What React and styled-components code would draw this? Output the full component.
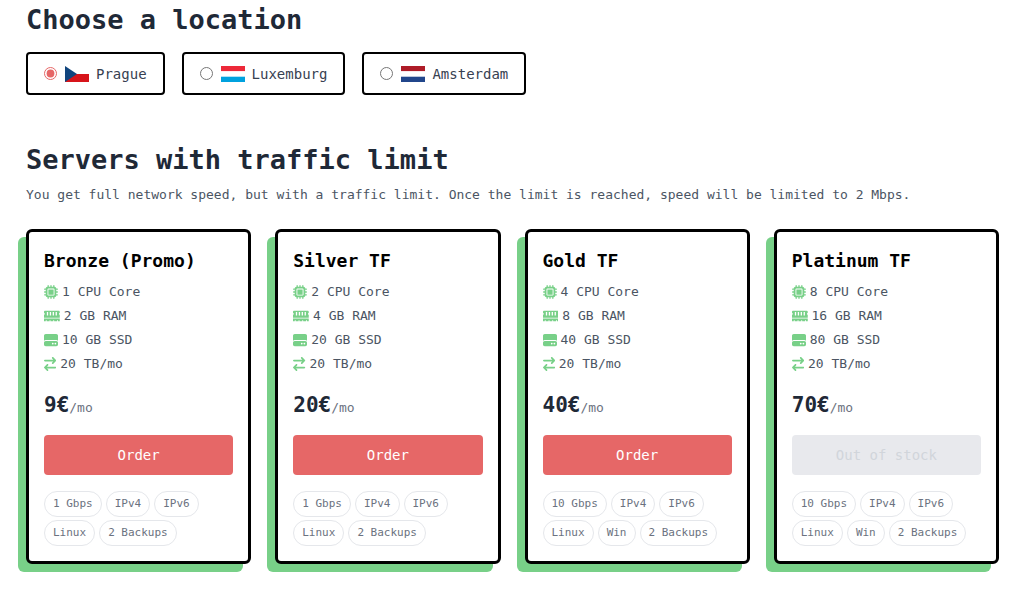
import React, { useState } from "react";
import styled, { createGlobalStyle } from "styled-components";
import { FaMicrochip, FaHardDrive } from "react-icons/fa6";

const GlobalStyle = createGlobalStyle`
  *, *::before, *::after { box-sizing: border-box; }
  body {
    margin: 0;
    background: #fff;
    color: #1f2937;
    font-family: "DejaVu Sans Mono", "Liberation Mono", monospace;
  }
  button, input { font-family: inherit; }
`;

const Page = styled.main`
  padding: 0 25px 24px 26px;
`;

const Heading = styled.h2`
  margin: 0;
  font-size: 27px;
  line-height: 40px;
  font-weight: 700;
`;

const Locations = styled.div`
  display: flex;
  flex-wrap: wrap;
  gap: 17px;
  margin: 12px 0 45px;
`;

const LocationOption = styled.label`
  display: flex;
  align-items: center;
  height: 43px;
  padding: 0 16px;
  border: 2px solid #000;
  border-radius: 4px;
  font-size: 14px;
  line-height: 24px;
  color: #374151;
  cursor: pointer;
`;

const Radio = styled.input`
  width: 13px;
  height: 13px;
  margin: 0 8px 0 0;
  accent-color: #e66767;
`;

const Flag = styled.svg`
  width: 24px;
  height: 16px;
  margin-right: 7px;
`;

const Intro = styled.p`
  margin: 4px 0 23px;
  font-size: 13px;
  line-height: 22px;
  color: #4b5563;
`;

const Plans = styled.div`
  display: grid;
  grid-template-columns: repeat(auto-fit, minmax(220px, 1fr));
  gap: 24px;
`;

const Card = styled.article`
  padding: 15px;
  border: 3px solid #000;
  border-radius: 6px;
  background: #fff;
  box-shadow: -8px 8px 0 #78d088;
`;

const PlanName = styled.h3`
  margin: 0 0 5px;
  font-size: 18px;
  line-height: 28px;
  font-weight: 700;
  color: #000;
`;

const Specs = styled.ul`
  margin: 0;
  padding: 0;
  list-style: none;
`;

const Spec = styled.li`
  display: flex;
  align-items: center;
  gap: 4px;
  font-size: 13px;
  line-height: 24px;
  color: #4b5563;

  svg {
    width: auto;
    height: 14px;
    color: #78d088;
  }
`;

const Price = styled.p`
  margin: 13px 0 14px;
  font-size: 21px;
  line-height: 32px;
  font-weight: 700;
`;

const Period = styled.span`
  font-size: 13px;
  line-height: 1;
  font-weight: 400;
  color: #6b7280;
`;

const OrderButton = styled.button`
  display: block;
  width: 100%;
  height: 40px;
  margin-bottom: 16px;
  padding: 0;
  border: 0;
  border-radius: 4px;
  background: #e66767;
  color: #fff;
  font-size: 14px;
  line-height: 24px;
  cursor: pointer;

  &:disabled {
    background: #e8e9ed;
    color: #d1d5db;
    cursor: default;
  }
`;

const Tags = styled.ul`
  display: flex;
  flex-wrap: wrap;
  gap: 3px 4px;
  margin: 0;
  padding: 0;
  list-style: none;
`;

const Tag = styled.li`
  padding: 0 8px;
  border: 1px solid #e5e7eb;
  border-radius: 13px;
  font-size: 11px;
  line-height: 24px;
  color: #6b7280;
`;

function MemoryIcon() {
  return (
    <svg viewBox="0 0 576 512" fill="currentColor" fillRule="evenodd" aria-hidden="true">
      <path d="M32 64C14 64 0 78 0 96v40c18 8 28 22 28 40S18 208 0 216v104h576V216c-18-8-28-22-28-40s10-32 28-40V96c0-18-14-32-32-32zM104 112h48v128h-48zM211 112h48v128h-48zM317 112h48v128h-48zM424 112h48v128h-48z" />
      <path d="M0 344v104h64v-32c0-9 7-16 16-16s16 7 16 16v32h108v-32c0-9 7-16 16-16s16 7 16 16v32h104v-32c0-9 7-16 16-16s16 7 16 16v32h108v-32c0-9 7-16 16-16s16 7 16 16v32h64V344z" />
    </svg>
  );
}

function TrafficIcon() {
  return (
    <svg viewBox="0 0 448 512" fill="currentColor" aria-hidden="true">
      <path d="M438.6 150.6c12.5-12.5 12.5-32.8 0-45.3l-96-96c-12.5-12.5-32.8-12.5-45.3 0s-12.5 32.8 0 45.3L338.7 96H32C14.3 96 0 110.3 0 128s14.3 32 32 32H338.7l-41.4 41.4c-12.5 12.5-12.5 32.8 0 45.3s32.8 12.5 45.3 0l96-96zM105.4 502.6c12.5 12.5 32.8 12.5 45.3 0s12.5-32.8 0-45.3L109.3 416H416c17.7 0 32-14.3 32-32s-14.3-32-32-32H109.3l41.4-41.4c12.5-12.5 12.5-32.8 0-45.3s-32.8-12.5-45.3 0l-96 96c-12.5 12.5-12.5 32.8 0 45.3l96 96z" />
    </svg>
  );
}

const locations = [
  {
    name: "Prague",
    flag: (
      <>
        <path fill="#fff" d="M0 0h24v8H0z" />
        <path fill="#d7141a" d="M0 8h24v8H0z" />
        <path fill="#11457e" d="M0 0l12 8L0 16z" />
      </>
    ),
  },
  {
    name: "Luxemburg",
    flag: (
      <>
        <path fill="#ed2939" d="M0 0h24v5.3H0z" />
        <path fill="#fff" d="M0 5.3h24v5.4H0z" />
        <path fill="#00a1de" d="M0 10.7h24V16H0z" />
      </>
    ),
  },
  {
    name: "Amsterdam",
    flag: (
      <>
        <path fill="#ae1c28" d="M0 0h24v5.3H0z" />
        <path fill="#fff" d="M0 5.3h24v5.4H0z" />
        <path fill="#21468b" d="M0 10.7h24V16H0z" />
      </>
    ),
  },
];

const plans = [
  {
    name: "Bronze (Promo)",
    cpu: 1,
    ram: 2,
    ssd: 10,
    price: 9,
    inStock: true,
    tags: ["1 Gbps", "IPv4", "IPv6", "Linux", "2 Backups"],
  },
  {
    name: "Silver TF",
    cpu: 2,
    ram: 4,
    ssd: 20,
    price: 20,
    inStock: true,
    tags: ["1 Gbps", "IPv4", "IPv6", "Linux", "2 Backups"],
  },
  {
    name: "Gold TF",
    cpu: 4,
    ram: 8,
    ssd: 40,
    price: 40,
    inStock: true,
    tags: ["10 Gbps", "IPv4", "IPv6", "Linux", "Win", "2 Backups"],
  },
  {
    name: "Platinum TF",
    cpu: 8,
    ram: 16,
    ssd: 80,
    price: 70,
    inStock: false,
    tags: ["10 Gbps", "IPv4", "IPv6", "Linux", "Win", "2 Backups"],
  },
];

function Plan({ plan }) {
  return (
    <Card>
      <PlanName>{plan.name}</PlanName>
      <Specs>
        <Spec><FaMicrochip />{`${plan.cpu} CPU Core`}</Spec>
        <Spec><MemoryIcon />{`${plan.ram} GB RAM`}</Spec>
        <Spec><FaHardDrive />{`${plan.ssd} GB SSD`}</Spec>
        <Spec><TrafficIcon />20 TB/mo</Spec>
      </Specs>
      <Price>
        {`${plan.price}€`}
        <Period>/mo</Period>
      </Price>
      <OrderButton type="button" disabled={!plan.inStock}>
        {plan.inStock ? "Order" : "Out of stock"}
      </OrderButton>
      <Tags>
        {plan.tags.map((tag) => (
          <Tag key={tag}>{tag}</Tag>
        ))}
      </Tags>
    </Card>
  );
}

export default function App() {
  const [location, setLocation] = useState("Prague");
  return (
    <>
      <GlobalStyle />
      <Page>
        <Heading id="location-heading">Choose a location</Heading>
        <Locations role="radiogroup" aria-labelledby="location-heading">
          {locations.map(({ name, flag }) => (
            <LocationOption key={name}>
              <Radio
                type="radio"
                name="location"
                value={name}
                checked={location === name}
                onChange={() => setLocation(name)}
              />
              <Flag viewBox="0 0 24 16" aria-hidden="true">{flag}</Flag>
              {name}
            </LocationOption>
          ))}
        </Locations>
        <Heading>Servers with traffic limit</Heading>
        <Intro>
          You get full network speed, but with a traffic limit. Once the limit
          is reached, speed will be limited to 2 Mbps.
        </Intro>
        <Plans>
          {plans.map((plan) => (
            <Plan key={plan.name} plan={plan} />
          ))}
        </Plans>
      </Page>
    </>
  );
}
